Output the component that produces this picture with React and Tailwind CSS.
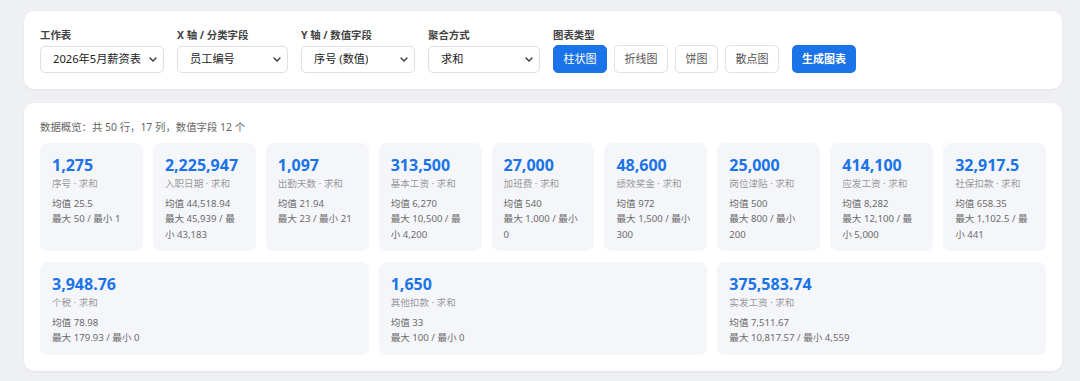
import React, { useState } from 'react';

const FONT = { fontFamily: '"Noto Sans", "Noto Sans CJK SC", sans-serif' };

const fields = [
  { id: 'sheet', label: '工作表', value: '2026年5月薪资表', width: 'w-[124px]' },
  { id: 'x', label: 'X 轴 / 分类字段', value: '员工编号', width: 'w-[111px]' },
  { id: 'y', label: 'Y 轴 / 数值字段', value: '序号 (数值)', width: 'w-[114px]' },
  { id: 'agg', label: '聚合方式', value: '求和', width: 'w-[112px]' },
];

const chartTypes = [
  { id: 'bar', label: '柱状图' },
  { id: 'line', label: '折线图' },
  { id: 'pie', label: '饼图' },
  { id: 'scatter', label: '散点图' },
];

const stats = [
  { value: '1,275', name: '序号', avg: '25.5', max: '50', min: '1' },
  { value: '2,225,947', name: '入职日期', avg: '44,518.94', max: '45,939', min: '43,183' },
  { value: '1,097', name: '出勤天数', avg: '21.94', max: '23', min: '21' },
  { value: '313,500', name: '基本工资', avg: '6,270', max: '10,500', min: '4,200' },
  { value: '27,000', name: '加班费', avg: '540', max: '1,000', min: '0' },
  { value: '48,600', name: '绩效奖金', avg: '972', max: '1,500', min: '300' },
  { value: '25,000', name: '岗位津贴', avg: '500', max: '800', min: '200' },
  { value: '414,100', name: '应发工资', avg: '8,282', max: '12,100', min: '5,000' },
  { value: '32,917.5', name: '社保扣款', avg: '658.35', max: '1,102.5', min: '441' },
  { value: '3,948.76', name: '个税', avg: '78.98', max: '179.93', min: '0' },
  { value: '1,650', name: '其他扣款', avg: '33', max: '100', min: '0' },
  { value: '375,583.74', name: '实发工资', avg: '7,511.67', max: '10,817.57', min: '4,559' },
];

const Chevron = () => (
  <svg width="8" height="5" viewBox="0 0 8 5" fill="none" className="shrink-0">
    <path d="M1 1l3 3 3-3" stroke="#333" strokeWidth="1.3" strokeLinecap="round" strokeLinejoin="round" />
  </svg>
);

const FakeSelect = ({ value, width }) => (
  <button
    type="button"
    className={`${width} h-[27px] flex items-center justify-between pl-[12px] pr-[6px] rounded-[5px] border border-[#dcdfe6] bg-white text-[11.2px] text-[#222]`}
  >
    <span className="truncate">{value}</span>
    <Chevron />
  </button>
);

const StatCard = ({ item }) => (
  <div className="flex-1 basis-[100px] rounded-[8px] bg-[#f5f6fa] px-3 pt-3 pb-[9px]">
    <div className="text-[16px] font-bold leading-[20px] text-[#1a73e8]">{item.value}</div>
    <div className="mt-px text-[9.6px] leading-[15px] text-[#999]">{item.name} · 求和</div>
    <div className="mt-[4.5px] text-[9.6px] leading-[15.5px] text-[#6a6a6a]">
      <div>均值 {item.avg}</div>
      <div>最大 {item.max} / 最小 {item.min}</div>
    </div>
  </div>
);

export default function App() {
  const [chartType, setChartType] = useState('bar');

  return (
    <div className="min-h-screen bg-[#eff0f4] pl-[24px] pr-[18px] pt-[11px] pb-[11px]" style={FONT}>
      {/* Controls */}
      <div className="rounded-[10px] bg-white px-4 pt-4 pb-4 shadow-[0_1px_3px_rgba(0,0,0,0.05)]">
        <div className="flex items-end gap-[13px]">
          {fields.map((f) => (
            <div key={f.id} className="flex flex-col">
              <label className="mb-[3px] text-[10.4px] font-bold leading-[16px] text-[#444]">{f.label}</label>
              <FakeSelect value={f.value} width={f.width} />
            </div>
          ))}
          <div className="flex flex-col">
            <label className="mb-[2px] text-[10.4px] font-bold leading-[16px] text-[#444]">图表类型</label>
            <div className="flex gap-[7px]">
              {chartTypes.map((t) => (
                <button
                  key={t.id}
                  type="button"
                  onClick={() => setChartType(t.id)}
                  className={`h-[28px] px-[9.5px] rounded-[5px] border text-[11px] ${
                    chartType === t.id
                      ? 'bg-[#1a73e8] border-[#1a73e8] text-white'
                      : 'bg-white border-[#dfe2e8] text-[#555]'
                  }`}
                >
                  {t.label}
                </button>
              ))}
            </div>
          </div>
          <button
            type="button"
            className="h-[28px] px-[10px] rounded-[5px] bg-[#1a73e8] text-[11px] font-bold text-white"
          >
            生成图表
          </button>
        </div>
      </div>

      {/* Overview */}
      <div className="mt-[14px] rounded-[10px] bg-white px-4 pt-4 pb-4 shadow-[0_1px_3px_rgba(0,0,0,0.05)]">
        <div className="mb-[8px] text-[10.4px] leading-[16px] text-[#666]">数据概览：共 50 行，17 列，数值字段 12 个</div>
        <div className="flex flex-wrap gap-[10px] gap-y-[11px]">
          {stats.map((s) => (
            <StatCard key={s.name} item={s} />
          ))}
        </div>
      </div>
    </div>
  );
}
